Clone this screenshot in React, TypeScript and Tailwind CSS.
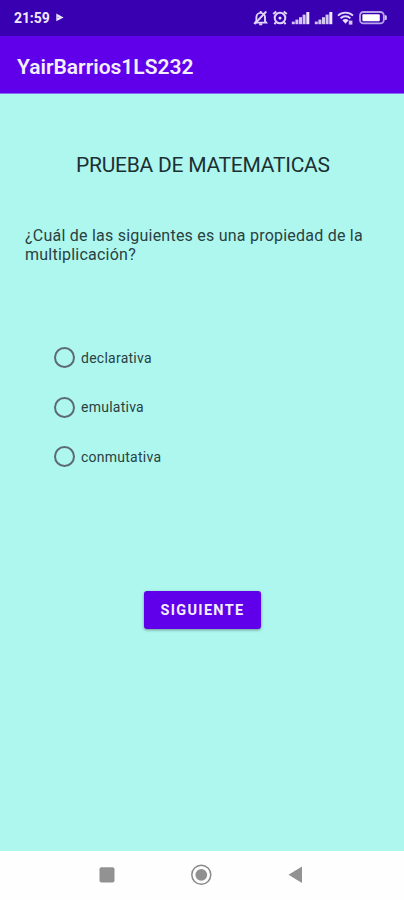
const options = ['declarativa', 'emulativa', 'conmutativa']

const SignalIcon = () => (
  <svg width="19" height="14" viewBox="0 0 19 14" fill="#d3c5f2">
    <rect x="0.8" y="10.6" width="3" height="2.6" />
    <rect x="4.4" y="8.6" width="3" height="4.6" />
    <rect x="8" y="6.2" width="3" height="7" />
    <rect x="11.6" y="3.6" width="3" height="9.6" />
    <rect x="15.3" y="1" width="3" height="12.2" fill="#eee8fc" />
  </svg>
)

const StatusBar = () => (
  <div className="flex h-[36px] items-center bg-[#3800b0] pl-[14px] text-[#f0eafc]">
    <span className="w-[36px] whitespace-nowrap text-[14px] leading-[16px] font-bold tracking-[-0.1px]">21:59</span>
    <svg className="ml-[5px]" width="9" height="10" viewBox="0 0 9 10">
      <path d="M1.3 0.5 8.6 4.4 1.3 8.3Z" fill="#e9e2fb" />
      <path d="M2.6 3.7 4 4.4 2.6 5.1Z" fill="#6a3fc6" />
    </svg>
    <div className="ml-[189px] flex items-center">
      <svg width="15" height="16" viewBox="0 0 15 16" fill="none" stroke="#e0d6f8" strokeWidth="1.9">
        <path d="M3.4 11V7.2a4.3 4.3 0 0 1 8.6 0V11l1.2 1.6H2.2Z" />
        <path d="M7.7 1v2M6.2 14.3h3" />
        <path d="M13.3 1.5 1.5 14" />
      </svg>
      <svg className="ml-[4px]" width="16" height="16" viewBox="0 0 16 16" fill="none" stroke="#e0d6f8" strokeWidth="2">
        <circle cx="8" cy="8" r="5.3" />
        <path d="M1.2 4 4.3 1.5M14.8 4l-3.1-2.5M3.8 12.3l-1.4 1.8M12.2 12.3l1.4 1.8" />
        <circle cx="8" cy="8" r="1.5" fill="#e9e2fb" stroke="none" />
      </svg>
      <span className="ml-[3px]">
        <SignalIcon />
      </span>
      <span className="ml-[4px]">
        <SignalIcon />
      </span>
      <svg className="ml-[4px]" width="18" height="14" viewBox="0 0 18 14" fill="none" stroke="#e0d6f8" strokeWidth="1.9">
        <path d="M1 4.6c4.2-4 10.8-4 15 0" />
        <path d="M3.6 7.4c2.7-2.8 7.1-2.8 9.8 0" />
        <path d="M5.4 9.3c1.8-1.7 4.4-1.7 6.2 0L8.5 12.8Z" fill="#e9e2fb" stroke="none" />
        <path d="M11.8 9.6h3.6v4h-3.6Z" fill="#d3c5f2" stroke="none" />
      </svg>
      <svg className="ml-[4px]" width="29" height="14" viewBox="0 0 29 14">
        <rect x="1" y="1" width="23.8" height="11.4" rx="3.4" fill="none" stroke="#b7a5ea" strokeWidth="1.8" />
        <rect x="3.4" y="3.2" width="17.4" height="7" rx="1" fill="#fff" />
        <path d="M25.7 4.3h1a1.1 1.1 0 0 1 1.1 1.1V8a1.1 1.1 0 0 1-1.1 1.1h-1Z" fill="#d3c5f2" />
      </svg>
    </div>
  </div>
)

const NavBar = () => (
  <div className="flex h-[49px] items-center bg-[#fefefe] pb-px pl-[99px]">
    <svg width="16" height="16" viewBox="0 0 16 16">
      <rect x="0.5" y="0.2" width="15" height="15.2" rx="2" fill="#929292" />
    </svg>
    <svg className="ml-[75px]" width="22" height="22" viewBox="0 0 22 22">
      <circle cx="11.3" cy="10.8" r="9.5" fill="none" stroke="#8a8a8a" strokeWidth="1.5" />
      <circle cx="11.3" cy="10.8" r="5.9" fill="#909090" />
    </svg>
    <svg className="ml-[76px]" width="15" height="18" viewBox="0 0 15 18">
      <path d="M0.5 8.8 14 0.6V17Z" fill="#929292" />
    </svg>
  </div>
)

const App = () => {
  return (
    <div className="flex h-[900px] w-[404px] flex-col overflow-hidden bg-[#aef7ef] font-[Roboto,sans-serif]">
      <StatusBar />
      <header className="flex h-[58px] items-center border-b border-[#8a6cec] bg-[#6000ea] pt-[4px] pl-[17px]">
        <h1 className="whitespace-nowrap text-[21px] leading-6 font-semibold text-[#f4effe]">YairBarrios1LS232</h1>
      </header>
      <main className="flex flex-1 flex-col">
        <h2 className="mt-[59px] pl-[76px] whitespace-nowrap text-[21px] leading-6 tracking-[-0.25px] text-[#1d3032]">
          PRUEBA DE MATEMATICAS
        </h2>
        <p className="mt-[49px] pl-[25px] text-[16px] leading-[19px] tracking-[0.23px] whitespace-nowrap text-[#29413f]">
          ¿Cuál de las siguientes es una propiedad de la
          <br />
          multiplicación?
        </p>
        <div className="mt-[69px] flex flex-col pl-[54px]">
          {options.map((option) => (
            <label key={option} className="flex h-[49.5px] items-center">
              <input
                type="radio"
                name="respuesta"
                className="size-[21px] appearance-none rounded-full border-2 border-[#5d6a70] checked:border-[#6000ea] checked:bg-[#6000ea]"
              />
              <span className="ml-[6px] text-[14px] leading-4 tracking-[0.25px] text-[#29413f]">{option}</span>
            </label>
          ))}
        </div>
        <button className="mt-[109px] ml-[144px] h-[38px] w-[117px] rounded-[3px] bg-[#6000ea] pt-[3px] text-[14.5px] font-bold tracking-[1.3px] text-[#f4effe] shadow-[0_1px_3px_rgba(0,0,0,0.4)]">
          SIGUIENTE
        </button>
      </main>
      <NavBar />
    </div>
  )
}

export default App
